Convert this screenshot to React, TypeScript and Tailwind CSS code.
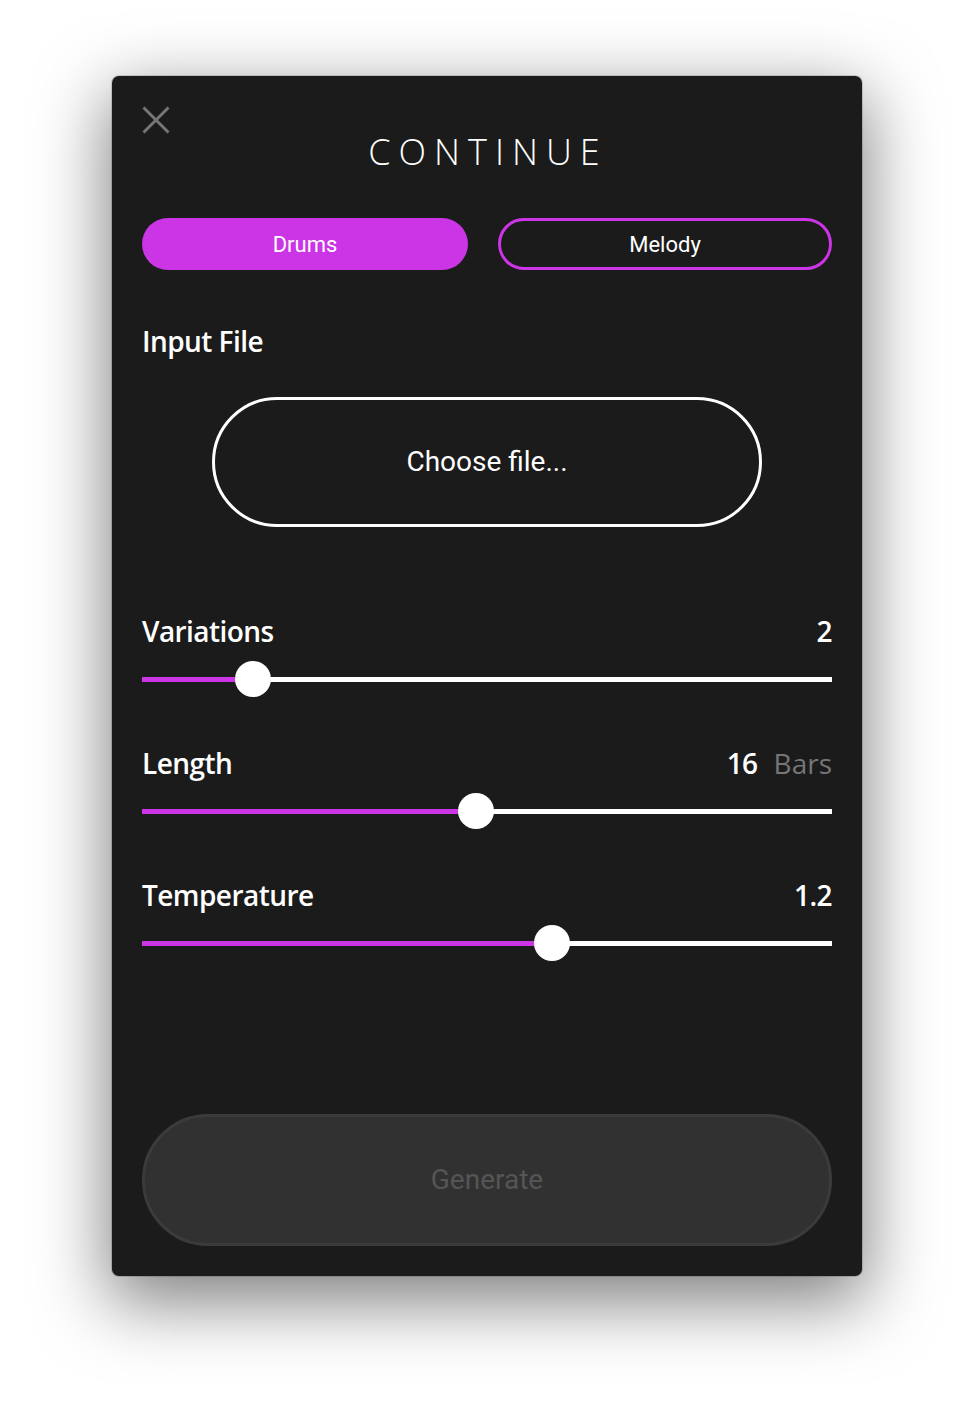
import React from "react";

type SliderProps = {
  label: string;
  value: string;
  unit?: string;
  fraction: number;
  className?: string;
};

function Slider({ label, value, unit, fraction, className }: SliderProps) {
  const center = 18 + fraction * (690 - 36);
  return (
    <div className={className}>
      <div className="flex items-start justify-between h-[28px] text-[28px] leading-[28px] font-semibold tracking-[-0.02em] text-white font-['Open_Sans',sans-serif]">
        <span>{label}</span>
        <span className="flex">
          <span>{value}</span>
          {unit ? <span className="ml-[16px] font-normal tracking-normal text-[#767676]">{unit}</span> : null}
        </span>
      </div>
      <div className="relative mt-[16px] h-[36px]">
        <div className="absolute left-0 right-0 top-[16px] h-[5px] bg-white" />
        <div
          className="absolute left-0 top-[16px] h-[5px] bg-[#cb35e6]"
          style={{ width: center }}
        />
        <div
          className="absolute top-0 h-[36px] w-[36px] rounded-full bg-white"
          style={{ left: center - 18 }}
        />
      </div>
    </div>
  );
}

export default function App() {
  return (
    <div className="min-h-[1424px] w-[974px] bg-white pt-[76px] pl-[112px]">
      <div className="relative flex h-[1200px] w-[750px] flex-col rounded-[7px] bg-[#1b1b1b] px-[30px] pb-[30px] shadow-[0_22px_70px_4px_rgba(0,0,0,0.5),0_0_0_1px_rgba(0,0,0,0.15)]">
        <button className="absolute left-[30px] top-[30px] h-[28px] w-[28px]" aria-label="Close">
          <svg width="28" height="28" viewBox="0 0 28 28">
            <path d="M1.5 1.5 L26.5 26.5 M26.5 1.5 L1.5 26.5" stroke="#767676" strokeWidth="3" fill="none" />
          </svg>
        </button>

        <div className="pt-[58px] pl-[2px] text-center text-[36px] leading-[36px] font-light tracking-[8px] text-white font-['Open_Sans',sans-serif]">
          CONTINUE
        </div>

        <div className="mt-[48px] grid grid-cols-[326px_1fr] gap-[30px] font-['Roboto',sans-serif] text-[22px]">
          <button className="h-[52px] rounded-full bg-[#cb35e6] text-white">Drums</button>
          <button className="h-[52px] rounded-full border-[3px] border-[#cb35e6] text-white">Melody</button>
        </div>

        <div className="mt-[57px] h-[28px] text-[28px] leading-[28px] font-semibold tracking-[-0.02em] text-white font-['Open_Sans',sans-serif]">
          Input File
        </div>

        <button className="mx-auto mt-[42px] h-[130px] w-[550px] rounded-full border-[3px] border-white text-[28px] text-white font-['Roboto',sans-serif]">
          Choose file...
        </button>

        <Slider className="mt-[90px]" label="Variations" value="2" fraction={1 / 7} />
        <Slider className="mt-[52px]" label="Length" value="16" unit="Bars" fraction={15 / 31} />
        <Slider className="mt-[52px]" label="Temperature" value="1.2" fraction={0.6} />

        <button className="mt-auto h-[132px] w-full rounded-full border-[3px] border-[#3b3b3b] bg-[#313131] text-[28px] text-[#555555] font-['Roboto',sans-serif]">
          Generate
        </button>
      </div>
    </div>
  );
}
